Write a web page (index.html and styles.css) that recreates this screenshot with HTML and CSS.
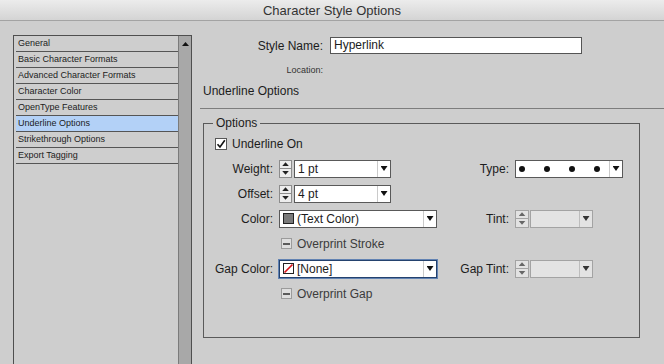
FILE: index.html
```html
<!DOCTYPE html>
<html lang="en">
<head>
  <meta charset="UTF-8">
  <title>Character Style Options</title>
  <link rel="stylesheet" href="styles.css">
</head>
<body>
  <div class="titlebar">Character Style Options</div>

  <div class="dialog">
    <div class="sidebar">
      <ul class="list">
        <li>General</li>
        <li>Basic Character Formats</li>
        <li>Advanced Character Formats</li>
        <li>Character Color</li>
        <li>OpenType Features</li>
        <li class="selected">Underline Options</li>
        <li>Strikethrough Options</li>
        <li>Export Tagging</li>
      </ul>
      <div class="scrollbar">
        <svg class="scroll-up" width="7" height="4" viewBox="0 0 7 4"><path d="M3.5 0L7 4H0Z" fill="#111"/></svg>
      </div>
    </div>

    <div class="panel">
      <div class="name-row">
        <label>Style Name:</label>
        <div class="text-input">Hyperlink</div>
      </div>
      <div class="location">Location:</div>
      <h2 class="section-title">Underline Options</h2>
      <hr class="divider">

      <fieldset class="group">
        <legend>Options</legend>
        <div class="form">
          <div class="check-row">
            <span class="checkbox">
              <svg width="10" height="10" viewBox="0 0 10 10"><path d="M1.5 5.2L4 8L8.8 1.2" fill="none" stroke="#111" stroke-width="1.6"/></svg>
            </span>
            Underline On
          </div>

          <label class="label left">Weight:</label>
          <div class="ctl">
            <div class="spinner"><span class="up"></span><span class="down"></span></div>
            <div class="select w-weight"><span class="value">1 pt</span><span class="arrow"></span></div>
          </div>
          <label class="label">Type:</label>
          <div class="ctl">
            <div class="select w-type">
              <span class="value dots"><i></i><i></i><i></i><i></i></span><span class="arrow"></span>
            </div>
          </div>

          <label class="label left">Offset:</label>
          <div class="ctl">
            <div class="spinner"><span class="up"></span><span class="down"></span></div>
            <div class="select w-weight"><span class="value">4 pt</span><span class="arrow"></span></div>
          </div>

          <label class="label left">Color:</label>
          <div class="ctl">
            <div class="select w-color"><span class="value"><span class="swatch"></span>(Text Color)</span><span class="arrow"></span></div>
          </div>
          <label class="label">Tint:</label>
          <div class="ctl tight">
            <div class="spinner off"><span class="up"></span><span class="down"></span></div>
            <div class="select off w-tint"><span class="value"></span><span class="arrow"></span></div>
          </div>

          <div class="overprint"><span class="dash-box"></span>Overprint Stroke</div>

          <label class="label left">Gap Color:</label>
          <div class="ctl">
            <div class="select focus w-color">
              <span class="value">
                <svg class="none-swatch" width="11" height="11" viewBox="0 0 11 11"><rect x="0.5" y="0.5" width="10" height="10" fill="#fff" stroke="#222"/><path d="M1.5 9.5L9.5 1.5" stroke="#d7141b" stroke-width="1.7"/></svg>[None]
              </span>
              <span class="arrow"></span>
            </div>
          </div>
          <label class="label">Gap Tint:</label>
          <div class="ctl tight">
            <div class="spinner off"><span class="up"></span><span class="down"></span></div>
            <div class="select off w-tint"><span class="value"></span><span class="arrow"></span></div>
          </div>

          <div class="overprint"><span class="dash-box"></span>Overprint Gap</div>
        </div>
      </fieldset>
    </div>
  </div>
</body>
</html>
```

FILE: styles.css
```css
body {
  margin: 0;
  width: 664px;
  height: 364px;
  overflow: hidden;
  background: #cecece;
  font-family: "Liberation Sans", Arial, sans-serif;
  color: #1c1c1c;
}
.titlebar {
  height: 20px;
  line-height: 21px;
  text-align: center;
  font-size: 13px;
  color: #333;
  background: linear-gradient(#ececec, #d4d4d4);
  border-bottom: 1px solid #a3a3a3;
}
.dialog {
  display: flex;
  height: 343px;
  padding: 14px 0 0 13px;
  box-sizing: border-box;
}

/* left list */
.sidebar {
  display: flex;
  flex-shrink: 0;
  width: 179px;
  height: 340px;
  box-sizing: border-box;
  border: 1px solid #4f4f4f;
  border-bottom: none;
}
.list {
  list-style: none;
  margin: 0;
  padding: 0 0 0 2px;
  width: 164px;
  font-size: 9px;
}
.list li {
  height: 15px;
  line-height: 15px;
  padding-left: 2px;
  border-bottom: 1px solid #555;
}
.list li.selected {
  background: #b3d1f7;
}
.scrollbar {
  width: 13px;
  box-sizing: border-box;
  background: #a8a8a8;
  border-left: 1px solid #7b7b7b;
}
.scroll-up {
  display: block;
  margin: 6px auto 0;
}

/* right panel */
.panel {
  flex: 1;
  padding-left: 11px;
}
.name-row {
  display: flex;
  align-items: center;
  height: 17px;
  margin-top: 2px;
}
.name-row label {
  width: 120px;
  margin-right: 7px;
  text-align: right;
  font-size: 12px;
}
.text-input {
  width: 252px;
  height: 17px;
  box-sizing: border-box;
  border: 1px solid #555;
  background: #fff;
  padding-left: 3px;
  font-size: 12px;
  line-height: 15px;
}
.location {
  width: 120px;
  margin-top: 11px;
  text-align: right;
  font-size: 9px;
  line-height: 11px;
  color: #333;
}
.section-title {
  margin: 8px 0 0;
  font-size: 12px;
  font-weight: normal;
  line-height: 14px;
}
.divider {
  margin: 10px 0 0 -3px;
  border: 0;
  border-top: 1px solid #7d7d7d;
}
.group {
  width: 437px;
  height: 222px;
  box-sizing: border-box;
  margin: 7px 0 0;
  padding: 0;
  border: 1px solid #5a5a5a;
}
.group legend {
  margin-left: 9px;
  padding: 0 3px;
  font-size: 12px;
  line-height: 14px;
}
.form {
  display: grid;
  grid-template-columns: 69px 158px 66px 1fr;
  grid-auto-rows: 25px;
  column-gap: 6px;
  align-items: center;
  padding-top: 1px;
  font-size: 12px;
}
.label {
  text-align: right;
}
.label.left {
  grid-column: 1;
}
.check-row {
  grid-column: 1 / -1;
  display: flex;
  align-items: center;
  padding-left: 11px;
}
.checkbox {
  display: flex;
  align-items: center;
  justify-content: center;
  width: 12px;
  height: 12px;
  box-sizing: border-box;
  margin-right: 5px;
  border: 1px solid #575757;
  background: #fff;
}
.ctl {
  display: flex;
  gap: 2px;
}
.ctl.tight {
  gap: 1px;
}

/* spinner arrows */
.spinner {
  display: flex;
  flex-direction: column;
  width: 13px;
  height: 18px;
  box-sizing: border-box;
  border: 1px solid #8c8c8c;
  background: #ededed;
}
.spinner span {
  flex: 1;
  display: flex;
  align-items: center;
  justify-content: center;
}
.spinner span + span {
  border-top: 1px solid #8c8c8c;
}
.spinner span::after {
  content: "";
  width: 7px;
  height: 4px;
  background: #222;
}
.spinner .up::after {
  clip-path: polygon(50% 0, 100% 100%, 0 100%);
}
.spinner .down::after {
  clip-path: polygon(0 0, 100% 0, 50% 100%);
}
.spinner.off {
  width: 14px;
  border-color: #a3a3a3;
  background: #e2e2e2;
}
.spinner.off span + span {
  border-top-color: #a3a3a3;
}
.spinner.off span::after {
  background: #666;
}

/* dropdowns */
.select {
  display: flex;
  height: 18px;
  box-sizing: border-box;
  border: 1px solid #595959;
  background: #fff;
}
.select .value {
  flex: 1;
  display: flex;
  align-items: center;
  padding-left: 3px;
  white-space: nowrap;
  overflow: hidden;
}
.select .arrow {
  display: flex;
  align-items: center;
  justify-content: center;
  width: 12px;
  border-left: 1px solid #cacaca;
}
.select .arrow::after {
  content: "";
  width: 7px;
  height: 5px;
  background: #111;
  clip-path: polygon(0 0, 100% 0, 50% 100%);
}
.select.off {
  border-color: #a3a3a3;
  background: #e3e3e3;
}
.select.off .arrow {
  border-left-color: #bdbdbd;
}
.select.off .arrow::after {
  background: #333;
}
.select.focus {
  border-color: #24426e;
  box-shadow: 0 0 0 1px #6283b3;
}
.w-weight {
  width: 97px;
}
.w-color {
  width: 158px;
}
.w-type {
  width: 108px;
}
.w-tint {
  width: 63px;
}
.dots {
  gap: 19px;
  padding-left: 5px;
}
.dots i {
  width: 6px;
  height: 6px;
  border-radius: 50%;
  background: #111;
}
.swatch {
  flex-shrink: 0;
  width: 11px;
  height: 11px;
  box-sizing: border-box;
  margin-right: 3px;
  border: 1px solid #222;
  background: #7a7a7a;
}
.none-swatch {
  flex-shrink: 0;
  margin-right: 3px;
}
.overprint {
  grid-column: 2;
  display: flex;
  align-items: center;
  padding-left: 2px;
  color: #3b3b3b;
}
.dash-box {
  display: flex;
  align-items: center;
  justify-content: center;
  width: 11px;
  height: 11px;
  box-sizing: border-box;
  margin-right: 5px;
  border: 1px solid #9b9b9b;
  background: #dedede;
}
.dash-box::after {
  content: "";
  width: 7px;
  height: 2px;
  background: #5a5a5a;
}
```
